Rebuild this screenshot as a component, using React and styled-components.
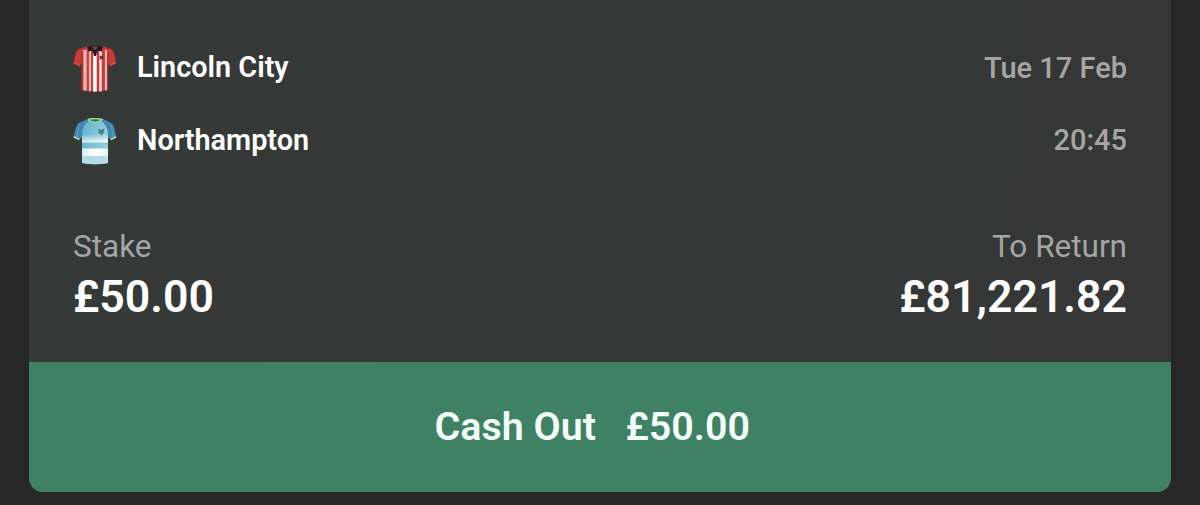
import styled, { createGlobalStyle } from "styled-components";

const selections = [
  { team: "Lincoln City", detail: "Tue 17 Feb", Kit: StripedShirt },
  { team: "Northampton", detail: "20:45", Kit: HoopedShirt },
];

function StripedShirt() {
  return (
    <Shirt viewBox="0 0 44 48">
      <path
        d="M15 1 L6 4 Q3 5.500 2.200 10 L0.500 18.500 L6.500 21.500 L9 18 L8.700 45 Q22 48.500 35 45 L34.700 18 L37.200 21.500 L43.200 18.500 L41.500 10 Q40.500 5.500 38 4 L29 1 Z"
        fill="#c73a37"
        stroke="#8c2b2a"
        strokeWidth="0.6"
      />
      <path d="M11.500 5 V45.500 M17 6 V46.300 M33 5 V45.300" stroke="#dfb9b5" strokeWidth="2.200" />
      <path d="M13 5 V45.800" stroke="#efe0dd" strokeWidth="1" />
      <path d="M21.900 8 V46.600" stroke="#ffffff" strokeWidth="3.600" />
      <path d="M27.500 6 V46.300" stroke="#eadbd8" strokeWidth="2.600" />
      <path d="M8.900 7 V45 M34.800 7 V45" stroke="#a62f2e" strokeWidth="0.9" />
      <path d="M14 1.500 Q22 0 30 1.500 L28.500 6.500 L24.500 5.500 L23 11 H21 L19.500 5.500 L15.500 6.500 Z" fill="#241a1f" />
      <path d="M18.500 2 Q22 1.200 25.500 2 L22 5 Z" fill="#54504f" />
      <path d="M26.800 11 L29.800 14.200 M29.800 11 L26.800 14.200" stroke="#402329" strokeWidth="1.200" />
      <path d="M1 17.500 L6.800 20.500 M42.700 17.500 L37 20.500" stroke="#dc6358" strokeWidth="0.8" />
    </Shirt>
  );
}

function HoopedShirt() {
  return (
    <Shirt viewBox="0 0 44 48">
      <defs>
        <linearGradient id="body" x1="0" x2="1" y1="0" y2="0.3">
          <stop offset="0" stopColor="#5fb2cf" />
          <stop offset="1" stopColor="#93cddd" />
        </linearGradient>
        <linearGradient id="fade" x1="0.3" x2="0.5" y1="0" y2="1">
          <stop offset="0" stopColor="#e9f6f9" stopOpacity="0" />
          <stop offset="1" stopColor="#f5fbfc" />
        </linearGradient>
        <linearGradient id="hoop" x1="0" x2="1">
          <stop offset="0" stopColor="#d9eff4" />
          <stop offset="0.5" stopColor="#ffffff" />
          <stop offset="1" stopColor="#e3f2f5" />
        </linearGradient>
      </defs>
      <path
        d="M14 1.500 Q22 4.500 30 1.500 L37 4.500 L37 17 L35 20 L35 45 Q22 47.500 9 45 L9 20 L6 17 L7 5 Z"
        fill="url(#body)"
      />
      <path d="M9 16 H35 V24.500 H9 Z" fill="url(#fade)" />
      <path d="M9 30.500 H35 V38.300 H9 Z" fill="url(#hoop)" />
      <path d="M9 38.300 H35 V45 Q22 47.500 9 45 Z" fill="#b5dbe4" />
      <path
        d="M14 1.500 L6.500 4.500 Q3.500 6 2.500 11 L0.700 19 L6.500 22 L9.200 18 Q8 9 15.500 3 Z M30 1.500 L37.500 4.500 Q40.500 6 41.500 11 L43.300 19 L37.500 22 L34.800 18 Q36 9 28.500 3 Z"
        fill="#3f86b1"
      />
      <path d="M7 6 Q4.500 10 4 19.500 M37 6 Q39.500 10 40 19.500" fill="none" stroke="#5398c0" strokeWidth="1.400" />
      <path d="M0.800 18.700 L6.300 21.500 M43.200 18.700 L37.700 21.500" stroke="#a8e2a1" strokeWidth="1.600" />
      <path d="M15 1.500 Q22 -0.500 29 1.500 Q22 7.500 15 1.500" fill="#36705b" stroke="#9bdc94" strokeWidth="1.400" />
      <path d="M25 10.500 L28 12 L31.500 10.500 L30.500 15.500 L28 17 L26 15 Z" fill="#438474" />
    </Shirt>
  );
}

function App() {
  return (
    <Page>
      <GlobalStyle />
      <BetCard>
        <Details>
          {selections.map(({ team, detail, Kit }) => (
            <Selection key={team}>
              <Kit />
              <Team>{team}</Team>
              <Time>{detail}</Time>
            </Selection>
          ))}
          <Totals>
            <Total>
              <Label>Stake</Label>
              <Amount>£50.00</Amount>
            </Total>
            <Total $align="right">
              <Label>To Return</Label>
              <Amount>£81,221.82</Amount>
            </Total>
          </Totals>
        </Details>
        <CashOut type="button">
          <span>Cash Out</span>
          <span>£50.00</span>
        </CashOut>
      </BetCard>
    </Page>
  );
}

const GlobalStyle = createGlobalStyle`
  * {
    box-sizing: border-box;
  }
  body {
    margin: 0;
    background: #272727;
    font-family: Roboto, "Liberation Sans", sans-serif;
  }
`;

const Page = styled.main`
  height: 505px;
  padding: 0 29px 12px;
  overflow: hidden;
`;

const BetCard = styled.section`
  display: flex;
  flex-direction: column;
  height: 492.4px;
  border-radius: 0 0 14px 14px;
  overflow: hidden;
  background: linear-gradient(97deg, #353938 0%, #353736 75%, #363636 100%);
`;

const Details = styled.div`
  flex: 1;
  padding: 30px 44px 0;
`;

const Team = styled.span`
  margin-left: 20px;
  color: #ffffff;
`;

const Time = styled.span`
  margin-left: auto;
  color: #a5a6a5;
  font-size: 29px;
  font-weight: 500;
`;

const Selection = styled.div`
  display: flex;
  align-items: center;
  height: 73px;
  font-size: 28.85px;
  font-weight: 600;

  &:first-child ${Time} {
    padding-top: 2px;
  }
`;

const Shirt = styled.svg`
  display: block;
  width: 44px;
  height: 48px;
  margin-top: 4px;
`;

const Totals = styled.div`
  display: flex;
  justify-content: space-between;
  margin-top: 51px;
`;

const Total = styled.div`
  text-align: ${({ $align }) => $align || "left"};
`;

const Label = styled.div`
  color: #a5a6a5;
  font-size: 31.5px;
  line-height: 40px;
`;

const Amount = styled.div`
  color: #ffffff;
  font-size: 44.6px;
  font-weight: 600;
  line-height: 60px;
`;

const CashOut = styled.button`
  display: flex;
  align-items: center;
  justify-content: center;
  gap: 29.5px;
  height: 130.6px;
  padding: 0 15.5px 1.4px 0;
  border: 0;
  background: #3f8263;
  color: #f4fffb;
  font-family: inherit;
  font-size: 39.4px;
  font-weight: 600;
`;

export default App;
